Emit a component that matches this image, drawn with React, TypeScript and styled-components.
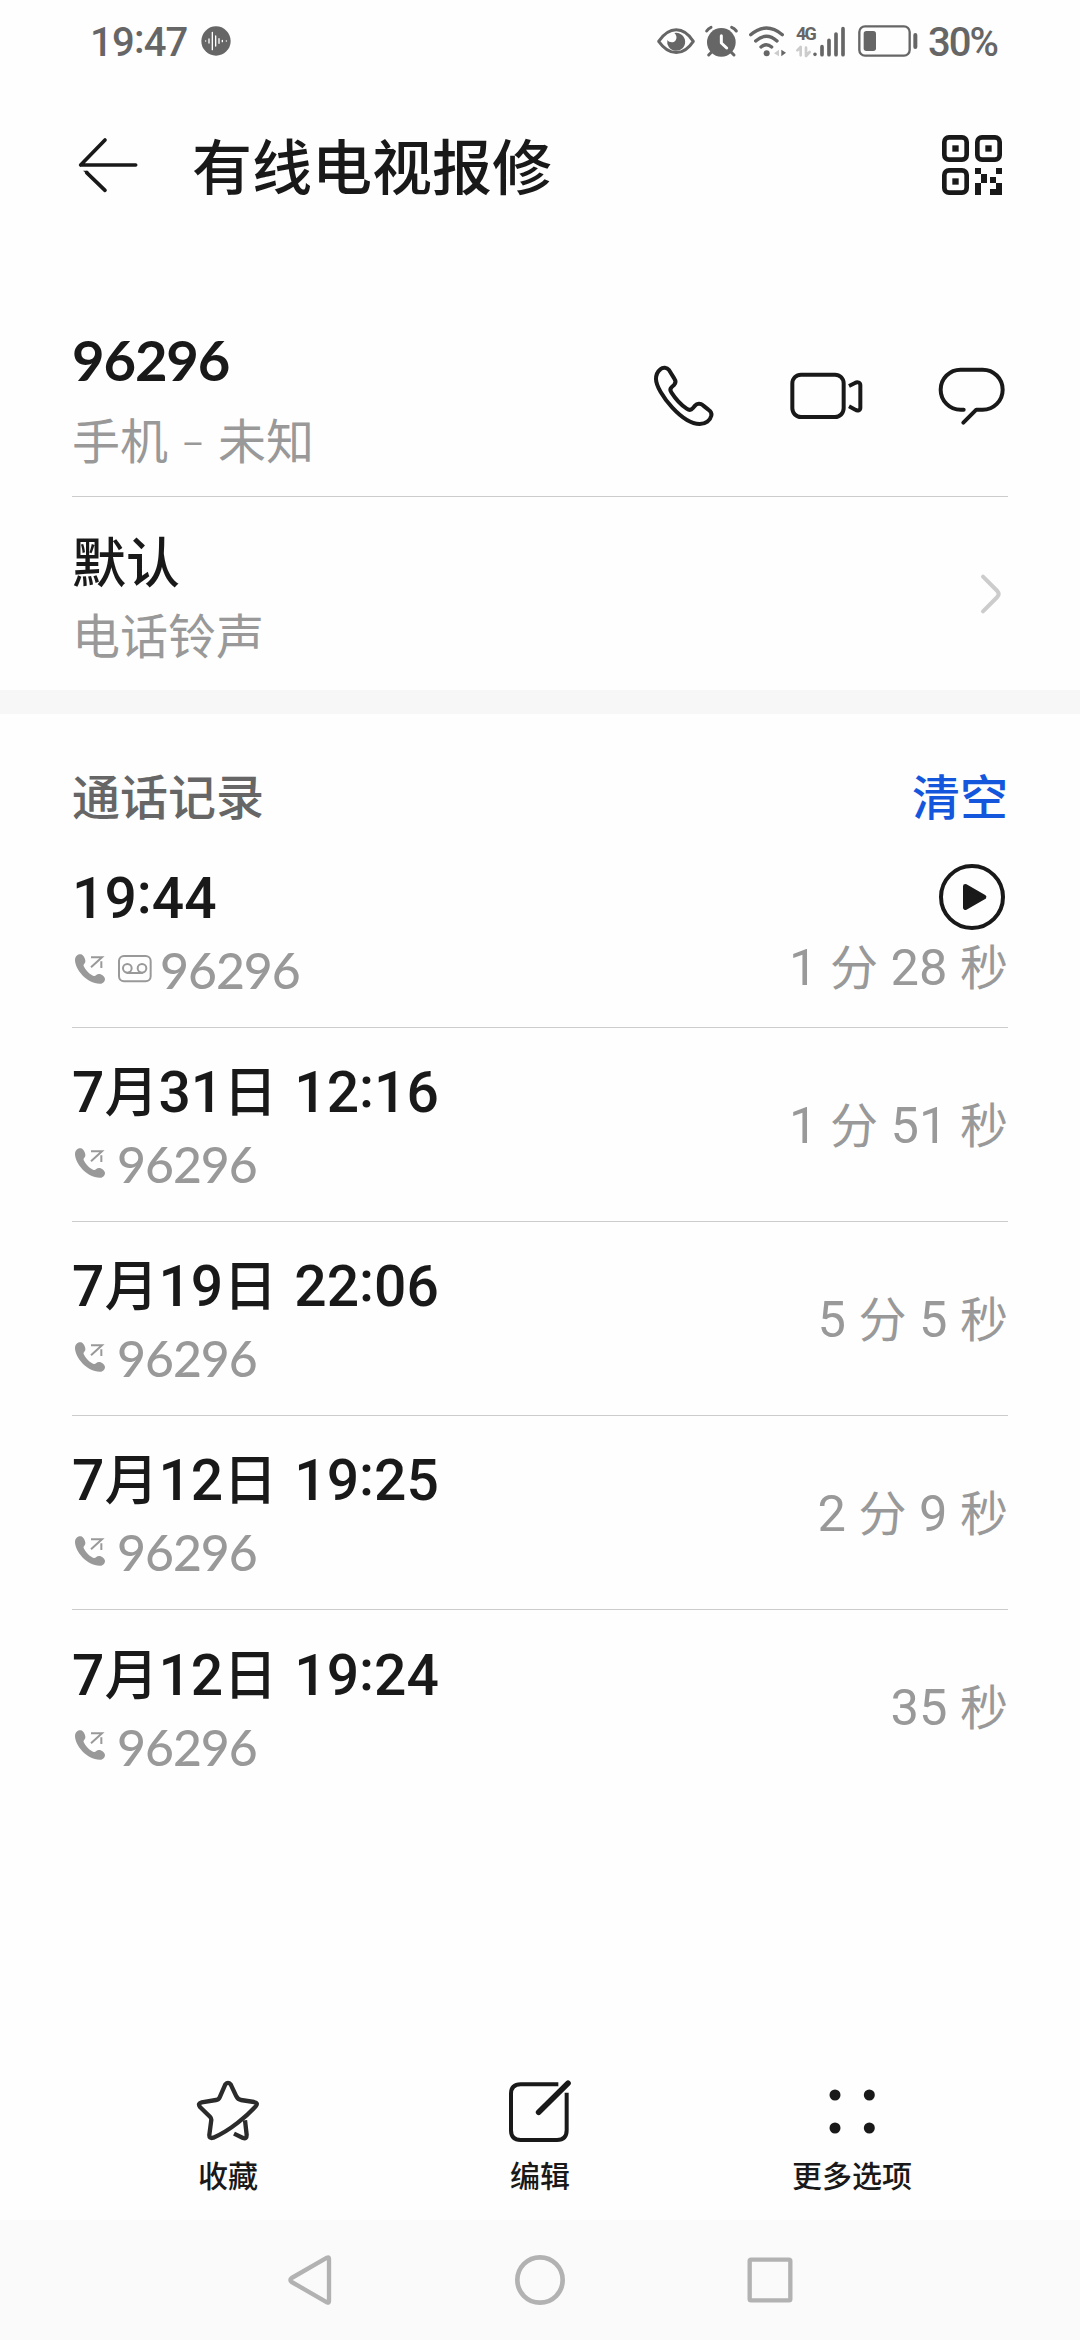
import React from "react";
import styled, { createGlobalStyle } from "styled-components";

const INK = "#191919";
const MUTED = "#999999";
const STATUS = "#666666";
const CJK = '"Noto Sans CJK SC", sans-serif';

const GlobalStyle = createGlobalStyle`
  *, *::before, *::after { box-sizing: border-box; }
  body {
    margin: 0;
    background: #fefefe;
    color: ${INK};
    font-family: Roboto, ${CJK};
  }
  svg { display: block; flex: none; overflow: visible; }
`;

const Screen = styled.main`
  display: flex;
  flex-direction: column;
  width: 1080px;
  height: 2340px;
  background: #fefefe;
`;

const StatusBar = styled.header`
  display: flex;
  align-items: center;
  justify-content: space-between;
  height: 82px;
  padding: 0 83px 0 90px;
  color: ${STATUS};
`;

const StatusGroup = styled.div<{ $gap: number }>`
  display: flex;
  align-items: center;
  gap: ${(p) => p.$gap}px;
`;

const StatusText = styled.span<{ $spacing: number }>`
  font-size: 40px;
  font-weight: 500;
  line-height: 48px;
  letter-spacing: ${(p) => p.$spacing}px;
  padding-top: 3px;
`;

const Network = styled.div`
  display: flex;
  align-items: flex-end;
`;

const NetworkType = styled.div`
  display: flex;
  flex-direction: column;
  width: 17px;
  height: 30px;
  justify-content: space-between;
  font: 700 18px/14px Roboto, sans-serif;
  letter-spacing: -2px;
`;

const TitleBar = styled.div`
  display: flex;
  align-items: center;
  height: 166px;
  margin-bottom: 47px;
  padding: 0 78px 0 77px;
`;

const Title = styled.h1`
  flex: 1;
  margin: -2px 0 0 53px;
  font: 500 60px/84px ${CJK};
`;

const Row = styled.section<{ $height: number; $divided?: boolean }>`
  display: flex;
  justify-content: space-between;
  align-items: center;
  flex: none;
  height: ${(p) => p.$height}px;
  margin: 0 72px;
  border-bottom: ${(p) => (p.$divided ? "1px solid #cccccc" : "0")};
`;

const TextColumn = styled.div<{ $gap: number; $top?: number }>`
  display: flex;
  flex-direction: column;
  gap: ${(p) => p.$gap}px;
  padding-top: ${(p) => p.$top ?? 0}px;
`;

const Primary = styled.div`
  font-size: 54px;
  font-weight: 500;
  line-height: 70px;
  white-space: pre;
`;

const Secondary = styled.div`
  display: flex;
  align-items: center;
  font-size: 48px;
  line-height: 64px;
  color: ${MUTED};
  white-space: pre;
`;

const Digits = styled.span`
  font-family: Roboto, sans-serif;
  font-size: 1.055em;
  line-height: 1;
`;

const DateGap = styled(Digits)`
  word-spacing: 3px;
`;

const Colon = styled.span`
  line-height: 1;
  vertical-align: 0.08em;
`;

const PhoneDigits = styled.span<{ $strong?: boolean }>`
  font-family: Lato, sans-serif;
  font-size: 1.04em;
  font-weight: ${(p) => (p.$strong ? 700 : 500)};
  line-height: 1;
  letter-spacing: -0.02em;
`;

const Dash = styled.span`
  display: inline-block;
  width: 50px;
  text-align: center;
`;

const DashMark = styled.span`
  font-size: 0.72em;
  line-height: 1;
  vertical-align: 3px;
`;

const Actions = styled.div`
  display: flex;
  align-items: center;
  gap: 74px;
  padding-right: 3px;
`;

const ChevronSlot = styled.div`
  padding-right: 2px;
`;

const Band = styled.div`
  flex: none;
  height: 24px;
  background: #f7f7f7;
`;

const LogHeader = styled.div`
  display: flex;
  justify-content: space-between;
  align-items: center;
  height: 120px;
  margin: 0 72px;
  padding-top: 40px;
  font: 500 48px/70px ${CJK};
  color: ${STATUS};
`;

const ClearButton = styled.button`
  border: 0;
  padding: 0;
  background: none;
  font: inherit;
  color: #1457dd;
`;

const CallMarks = styled.span<{ $end: number }>`
  display: flex;
  align-items: center;
  gap: 13px;
  padding: 0 ${(p) => p.$end}px 4px 3px;
`;

const CallAside = styled.div`
  display: flex;
  flex-direction: column;
  align-items: flex-end;
  gap: 7px;
  padding-top: 4px;
`;

const PlaySlot = styled.div`
  padding-right: 3px;
`;

const Spacer = styled.div`
  flex: 1;
`;

const Toolbar = styled.nav`
  display: grid;
  grid-template-columns: repeat(3, 1fr);
  height: 150px;
  padding: 0 72px;
`;

const Tool = styled.button`
  display: flex;
  flex-direction: column;
  align-items: center;
  gap: 10px;
  border: 0;
  padding: 10px 0 0;
  background: none;
  color: ${INK};
  font: 500 30px/44px ${CJK};
`;

const NavBar = styled.footer`
  display: grid;
  grid-template-columns: repeat(3, 230px);
  justify-content: center;
  justify-items: center;
  align-items: center;
  height: 120px;
  background: #fafafa;
  color: #b2b2b2;
`;

type DrawingProps = { w: number; h: number; color?: string; children: React.ReactNode };

/* Icon artwork is authored on a grid of three units per pixel. */
const Drawing = ({ w, h, color = "currentColor", children }: DrawingProps) => (
  <svg width={w} height={h} viewBox={`0 0 ${w * 3} ${h * 3}`} fill="none" stroke={color} strokeLinecap="round" strokeLinejoin="round">
    {children}
  </svg>
);

const VoiceIcon = () => (
  <Drawing w={30} h={30}>
    <circle cx="45" cy="45" r="44" fill="currentColor" stroke="none" />
    <g stroke="#fff" strokeWidth="4">
      <path d="M14 45v0M24 39v12M34 19v52M44 30v30M54 38v14M64 43v4M76 45v0" />
    </g>
  </Drawing>
);

const EyeIcon = () => (
  <Drawing w={38} h={27}>
    <path d="M5 40C37-6 79-6 109 40C79 85 37 85 5 40Z" strokeWidth="9" />
    <path d="M52 15A27 27 0 1 1 31 36C36 43 48 46 55 38C61 31 59 21 52 15Z" fill="currentColor" stroke="none" />
  </Drawing>
);

const AlarmIcon = () => (
  <Drawing w={33} h={31}>
    <circle cx="49" cy="49" r="43" fill="currentColor" stroke="none" />
    <path d="M5 15Q10 7 18 4M80 4Q88 7 94 15M20 78L11 87M78 78L87 87" strokeWidth="9" />
    <path d="M49 29V51L65 66" stroke="#fefefe" strokeWidth="9" />
  </Drawing>
);

const WifiIcon = () => (
  <Drawing w={37} h={31}>
    <path d="M5 26Q52-14 100 26M20 45Q52 16 84 45M36 63Q52 49 68 63" strokeWidth="10" />
    <circle cx="53" cy="82" r="9" fill="currentColor" stroke="none" />
    <path d="M90 71V91L75 82Z" fill="#cccccc" stroke="none" />
    <path d="M97 71V91L111 80Z" fill="currentColor" stroke="none" />
  </Drawing>
);

const DataArrows = () => (
  <Drawing w={16} h={11}>
    <path d="M14 3V28M14 3L4 13M30 5V30M30 30L41 18" stroke="#cccccc" strokeWidth="8" />
  </Drawing>
);

const SignalIcon = () => (
  <Drawing w={34} h={31}>
    <path d="M6 85v0M27 62v24M48 43v43M69 24v62M90 8v78" strokeWidth="11" />
  </Drawing>
);

const BatteryIcon = () => (
  <Drawing w={60} h={32}>
    <rect x="4" y="4" width="151" height="88" rx="17" strokeWidth="7" />
    <rect x="17" y="18" width="37" height="60" rx="8" fill="currentColor" stroke="none" />
    <path d="M172 30V66" strokeWidth="12" />
  </Drawing>
);

const BackIcon = () => (
  <Drawing w={62} h={58}>
    <path d="M11 87H176M11 87L84 12M29 110L84 163" strokeWidth="11" />
    <path d="M18 104H32L36 110L28 112Z" fill="currentColor" stroke="none" />
  </Drawing>
);

const QrIcon = () => (
  <Drawing w={60} h={60}>
    {[
      [0, 0],
      [99, 0],
      [0, 99],
    ].map(([x, y]) => (
      <g key={`${x}-${y}`}>
        <rect x={x + 7} y={y + 7} width="67" height="67" rx="14" strokeWidth="14" />
        <rect x={x + 31} y={y + 31} width="19" height="19" fill="currentColor" stroke="none" />
      </g>
    ))}
    <path
      d="M99 99h18v18h18v27h-18v36h-18v-36h18v-27h-18zM162 99h18v18h-18zM144 126h18v18h-18zM162 144h18v36h-36v-18h18z"
      fill="currentColor"
      stroke="none"
    />
  </Drawing>
);

const PhoneIcon = () => (
  <Drawing w={62} h={62}>
    <path
      d="M48 15C42 7 30 6 22 13C12 21 9 30 9 42C9 62 30 98 58 128C84 156 114 177 140 177C158 177 172 166 175 152C177 144 172 138 166 134L150 121C142 114 132 115 126 122L120 129C115 135 108 136 101 131C86 121 66 99 55 82C50 75 51 70 57 65L63 60C69 54 69 48 64 41L48 15Z"
      strokeWidth="12"
    />
  </Drawing>
);

const VideoIcon = () => (
  <Drawing w={74} h={52}>
    <rect x="10" y="14" width="154" height="127" rx="26" strokeWidth="12" />
    <path d="M180 48L198 39C206 34 214 38 214 46V113C214 121 206 124 199 119L180 109" strokeWidth="12" strokeLinecap="butt" />
  </Drawing>
);

const MessageIcon = () => (
  <Drawing w={68} h={60}>
    <path d="M80 131H71A60 60 0 0 1 71 11H137A60 60 0 0 1 137 131H118L79 170" strokeWidth="12" />
  </Drawing>
);

const ChevronIcon = () => (
  <Drawing w={27} h={40} color="#cccccc">
    <path d="M12 8L55 51Q63 60 55 69L12 112" strokeWidth="12" />
  </Drawing>
);

const OutgoingIcon = () => (
  <Drawing w={30} h={30}>
    <path
      d="M18 1C8-1 0 8 0 18C0 45 35 90 76 89C84 89 90 82 90 74C88 66 78 60 72 60C64 60 62 68 56 66C44 62 30 46 26 36C24 30 32 28 31 20C30 12 24 2 18 1Z"
      fill="currentColor"
      stroke="none"
    />
    <path d="M48 10H81L48 40M79 22V42" strokeWidth="6" strokeLinecap="butt" strokeLinejoin="miter" />
  </Drawing>
);

const VoicemailIcon = () => (
  <Drawing w={33} h={27}>
    <rect x="3" y="3" width="95" height="76" rx="15" strokeWidth="6" />
    <circle cx="28" cy="40" r="13" strokeWidth="6" />
    <circle cx="72" cy="40" r="13" strokeWidth="6" />
    <path d="M28 54H72" strokeWidth="6" />
  </Drawing>
);

const PlayIcon = () => (
  <Drawing w={66} h={66}>
    <circle cx="99" cy="99" r="93" strokeWidth="12" />
    <path d="M79 67L135 99L79 131Z" fill="currentColor" strokeWidth="14" />
  </Drawing>
);

const StarIcon = () => (
  <Drawing w={62} h={62}>
    <g transform="translate(-111 -89)" strokeWidth="13" stroke="#2b2b2b">
      <path d="M212 102L229 138Q234 148 243 149L282 155Q296 158 287 168C262 195 212 240 160 262Q147 266 148 253L154 208Q154 203 150 199L120 170Q112 159 125 156L168 149Q176 148 179 141L196 102Q204 93 212 102Z" />
      <path d="M255 210L260 253Q260 267 249 263L222 250" strokeLinecap="butt" />
    </g>
  </Drawing>
);

const EditIcon = () => (
  <Drawing w={62} h={62}>
    <g transform="translate(-1050 -89)">
      <path d="M1198 102H1085Q1056 102 1056 131V240Q1056 269 1085 269H1194Q1223 269 1223 240V127" strokeWidth="12" strokeLinecap="butt" />
      <path d="M1227 99L1139 186" strokeWidth="17" />
    </g>
  </Drawing>
);

const MoreIcon = () => (
  <Drawing w={62} h={62}>
    <g fill="currentColor" stroke="none">
      {[42, 145].map((x) => [45, 144].map((y) => <circle key={`${x}-${y}`} cx={x} cy={y} r="16.5" />))}
    </g>
  </Drawing>
);

const NavBack = () => (
  <Drawing w={44} h={50}>
    <path d="M117 8Q123 5 123 11V139Q123 145 117 142L11 81Q3 75 11 69Z" strokeWidth="13" />
  </Drawing>
);

const NavHome = () => (
  <Drawing w={50} h={50}>
    <circle cx="75" cy="75" r="68" strokeWidth="14" />
  </Drawing>
);

const NavRecent = () => (
  <Drawing w={46} h={46}>
    <rect x="8" y="8" width="122" height="122" rx="4" strokeWidth="13" />
  </Drawing>
);

/* The colon sits centred on the height of the digits round it. */
const Clock = ({ text }: { text: string }) => (
  <>
    {text.split(":").map((part, i) => (
      <React.Fragment key={i}>
        {i > 0 && <Colon>:</Colon>}
        {part}
      </React.Fragment>
    ))}
  </>
);

/* Latin digits run slightly larger than the Chinese glyphs beside them. */
const Mixed = ({ text, wide }: { text: string; wide?: boolean }) => {
  const Part = wide ? DateGap : Digits;
  return (
    <span>
      {text.split(/([\d: ]+)/).map((part, i) =>
        i % 2 ? (
          <Part key={i}>
            <Clock text={part} />
          </Part>
        ) : (
          part
        ),
      )}
    </span>
  );
};

type Call = { time: string; duration: string; recorded?: boolean };

const NUMBER = "96296";

const CALLS: Call[] = [
  { time: "19:44", duration: "1 分 28 秒", recorded: true },
  { time: "7月31日 12:16", duration: "1 分 51 秒" },
  { time: "7月19日 22:06", duration: "5 分 5 秒" },
  { time: "7月12日 19:25", duration: "2 分 9 秒" },
  { time: "7月12日 19:24", duration: "35 秒" },
];

const CallRow = ({ call, last }: { call: Call; last: boolean }) => (
  <Row $height={194} $divided={!last}>
    <TextColumn $gap={11}>
      <Primary>
        <Mixed text={call.time} wide />
      </Primary>
      <Secondary>
        <CallMarks $end={call.recorded ? 9 : 12}>
          <OutgoingIcon />
          {call.recorded && <VoicemailIcon />}
        </CallMarks>
        <PhoneDigits>{NUMBER}</PhoneDigits>
      </Secondary>
    </TextColumn>
    <CallAside>
      {call.recorded && (
        <PlaySlot>
          <PlayIcon />
        </PlaySlot>
      )}
      <Secondary>
        <Mixed text={call.duration} />
      </Secondary>
    </CallAside>
  </Row>
);

export default function App() {
  return (
    <>
      <GlobalStyle />
      <Screen>
        <StatusBar>
          <StatusGroup $gap={13}>
            <StatusText $spacing={-0.8}>
              <Clock text="19:47" />
            </StatusText>
            <VoiceIcon />
          </StatusGroup>
          <StatusGroup $gap={10.5}>
            <EyeIcon />
            <AlarmIcon />
            <WifiIcon />
            <Network>
              <NetworkType>
                4G
                <DataArrows />
              </NetworkType>
              <SignalIcon />
            </Network>
            <BatteryIcon />
            <StatusText $spacing={-2}>30%</StatusText>
          </StatusGroup>
        </StatusBar>

        <TitleBar>
          <BackIcon />
          <Title>有线电视报修</Title>
          <QrIcon />
        </TitleBar>

        <Row $height={202} $divided>
          <TextColumn $gap={13} $top={12}>
            <Primary>
              <PhoneDigits $strong>{NUMBER}</PhoneDigits>
            </Primary>
            <Secondary>
              手机
              <Dash>
                <DashMark>–</DashMark>
              </Dash>
              未知
            </Secondary>
          </TextColumn>
          <Actions>
            <PhoneIcon />
            <VideoIcon />
            <MessageIcon />
          </Actions>
        </Row>

        <Row $height={193}>
          <TextColumn $gap={6} $top={13}>
            <Primary>默认</Primary>
            <Secondary>电话铃声</Secondary>
          </TextColumn>
          <ChevronSlot>
            <ChevronIcon />
          </ChevronSlot>
        </Row>

        <Band />

        <LogHeader>
          通话记录
          <ClearButton>清空</ClearButton>
        </LogHeader>

        {CALLS.map((call, i) => (
          <CallRow key={i} call={call} last={i === CALLS.length - 1} />
        ))}

        <Spacer />

        <Toolbar>
          <Tool>
            <StarIcon />
            收藏
          </Tool>
          <Tool>
            <EditIcon />
            编辑
          </Tool>
          <Tool>
            <MoreIcon />
            更多选项
          </Tool>
        </Toolbar>

        <NavBar>
          <NavBack />
          <NavHome />
          <NavRecent />
        </NavBar>
      </Screen>
    </>
  );
}
